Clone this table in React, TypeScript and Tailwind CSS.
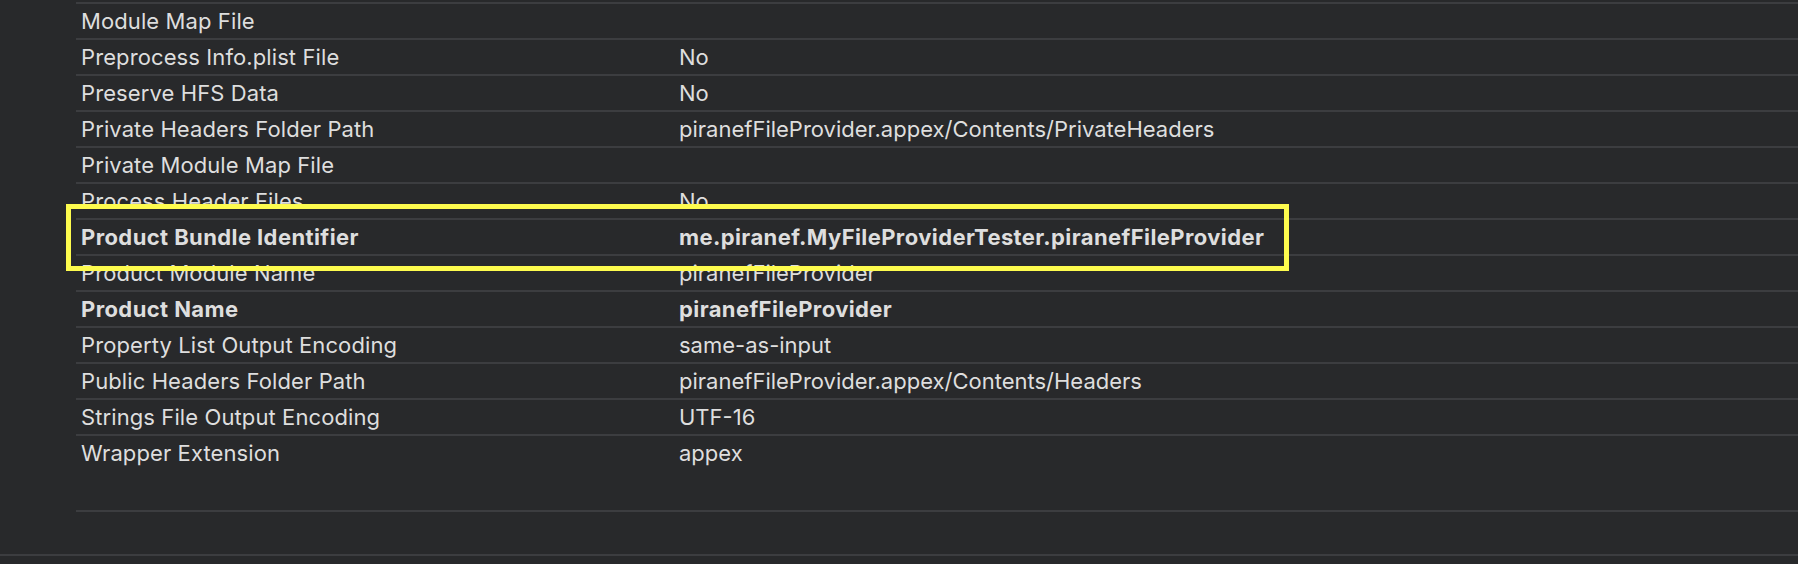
const rows: { label: string; value?: string; bold?: boolean }[] = [
  { label: "Module Map File" },
  { label: "Preprocess Info.plist File", value: "No" },
  { label: "Preserve HFS Data", value: "No" },
  { label: "Private Headers Folder Path", value: "piranefFileProvider.appex/Contents/PrivateHeaders" },
  { label: "Private Module Map File" },
  { label: "Process Header Files", value: "No" },
  { label: "Product Bundle Identifier", value: "me.piranef.MyFileProviderTester.piranefFileProvider", bold: true },
  { label: "Product Module Name", value: "piranefFileProvider" },
  { label: "Product Name", value: "piranefFileProvider", bold: true },
  { label: "Property List Output Encoding", value: "same-as-input" },
  { label: "Public Headers Folder Path", value: "piranefFileProvider.appex/Contents/Headers" },
  { label: "Strings File Output Encoding", value: "UTF-16" },
  { label: "Wrapper Extension", value: "appex" },
];

export default function App() {
  return (
    <div className="relative w-full h-[564px] overflow-hidden bg-[#28292b] text-[#dedede] font-['Inter',sans-serif] text-[22px]">
      {/* settings list */}
      <div className="ml-[76px] pt-[2px]">
        {rows.map((row) => (
          <div
            key={row.label}
            className={`flex items-center h-[36px] pt-[1px] border-t-2 border-[#3c3d40] ${
              row.bold ? "font-bold tracking-[0.4px]" : "font-normal"
            }`}
          >
            <span className={`w-[603px] pl-[5px] shrink-0 ${row.bold ? "" : "tracking-[0.1px]"}`}>{row.label}</span>
            <span>{row.value}</span>
          </div>
        ))}
        <div className="h-[40px]" />
        <div className="border-t-2 border-[#3c3d40] h-[44px]" />
      </div>
      <div className="border-t-2 border-[#3c3d40]" />

      {/* highlight annotation */}
      <div className="absolute left-[66px] top-[204px] w-[1223px] h-[67px] border-[5px] border-[#fdfb4e]" />
    </div>
  );
}
